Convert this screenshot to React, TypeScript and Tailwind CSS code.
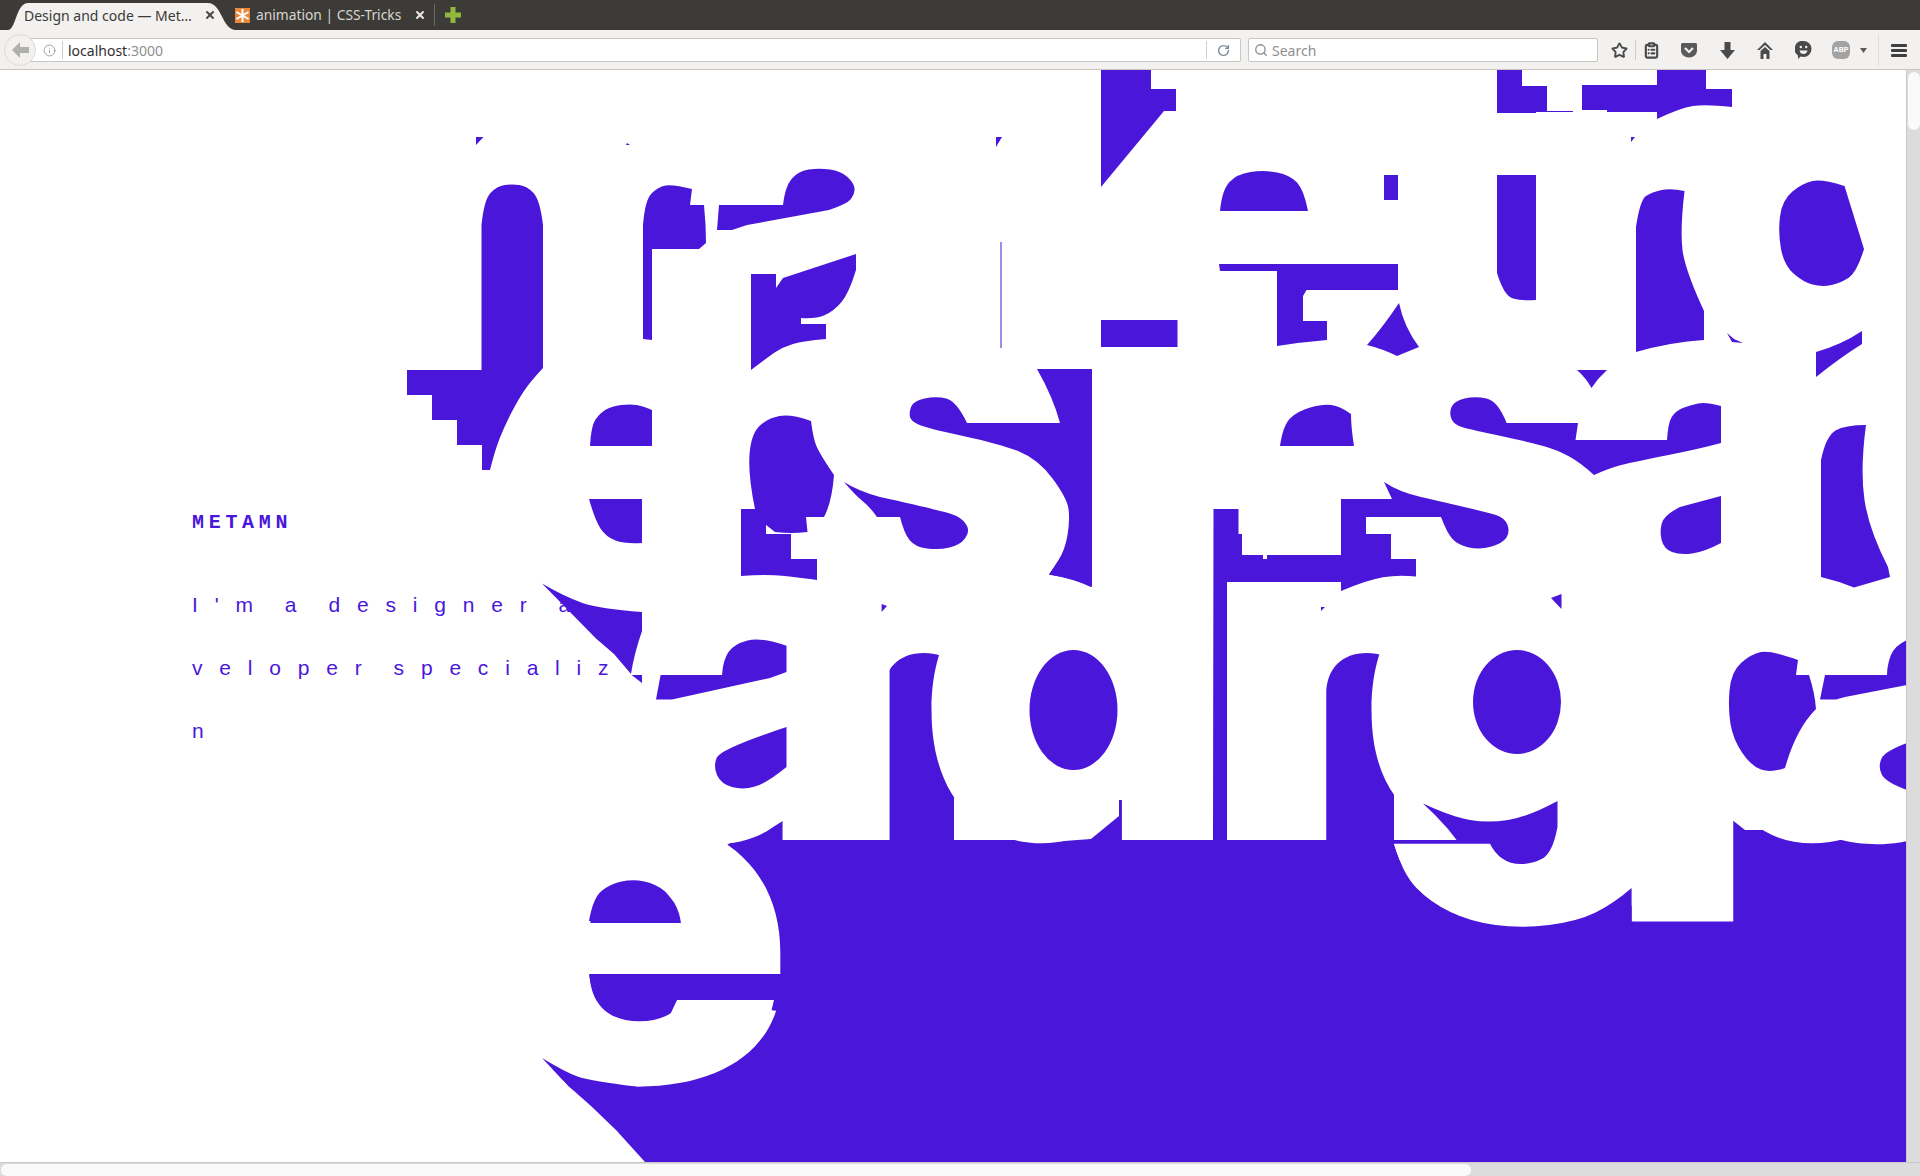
import type { ReactNode } from "react";
import { ClipboardList, Info, RotateCw, Search, Star, X } from "lucide-react";

const PURPLE = "#4a17da";
const SIZE = 475;
// page area starts under the browser chrome
const TOP = 70;

const ROW1 = 365;
const ROW2 = 602;
const ROW3 = 838;
const ROW4 = 1080;

const GLYPHS: { ch: string; x: number; base: number; sx?: number }[] = [
  { ch: "n", x: 357, base: ROW1 },
  { ch: "n", x: 519, base: ROW1 },
  { ch: "a", x: 678, base: ROW1 },
  { ch: "e", x: 1106, base: ROW1 },
  { ch: "u", x: 1372, base: ROW1 },
  { ch: "n", x: 1512, base: ROW1 },
  { ch: "o", x: 1661, base: ROW1 },
  { ch: "e", x: 476, base: ROW2 },
  { ch: "o", x: 631, base: ROW2 },
  { ch: "s", x: 782, base: ROW2 },
  { ch: "e", x: 1166, base: ROW2 },
  { ch: "s", x: 1322, base: ROW2 },
  { ch: "a", x: 1543, base: ROW2 },
  { ch: "n", x: 1697, base: ROW2 },
  { ch: "a", x: 609, base: ROW3 },
  { ch: "n", x: 757, base: ROW3 },
  { ch: "d", x: 916, base: ROW3 },
  { ch: "n", x: 1200, base: ROW3 },
  { ch: "g", x: 1356, base: ROW3 },
  { ch: "p", x: 1607, base: ROW3 },
  { ch: "a", x: 1773, base: ROW3 },
  { ch: "e", x: 470, base: ROW4, sx: 1.13 },
];

const G_CURVE = "1394,845 1403,874c 1430,902c 1470,921.5c 1521,928.5c 1577,921.5c 1613,904c 1631.6,888 1631.6,921.5 1731,921.5";

// long shadow sitting behind the big letters
const UNDER = [
  `645,1162 616,1130 591,1106 569,1086.6 542,1058 575,880 640,850 700,855 727,845 790,800 1394,800 ${G_CURVE} 1731,800 1907,800 1907,1162`,
  "880,640 962,640 962,810 880,810",
  "1320,640 1402,640 1402,810 1320,810",
];

// shadow fragments left between the letters, "c" marks a curved vertex
const OVER = [
  "476,137 483.5,137 476,145",
  "627,143 630,145 626,145",
  "996,137 1002,137 996,147",
  "1631,137 1635,137 1631,142",
  "1101,70 1151,70 1151,89 1176,89 1176,111 1164,111 1101,187",
  "1497,70 1522,70 1522,86 1547,86 1547,111 1573,111 1573,112 1536,112 1536,113 1497,113",
  "1582,85 1657,85 1657,70 1706,70 1706,89 1732,89 1732,107 1706,104c 1680,108c 1657,119 1657,112 1607,112 1607,110 1582,110",
  "481.5,370 481.5,225 484,200c 497,186c 512,184c 527,186c 540,200c 543,225 543,368 530,382c 518,400c 505,425c 495,450c 490,470 482,470 482,445 457,445 457,420 432,420 432,395 407,395 407,370",
  "643,339 643,225 645,200c 658,187c 673,184c 692,189 690,205 704,205 706,225c 706,243 699,249 652,249 652,340",
  "717,230 719,205 783,205 785,187c 798,171c 819,168c 841,171c 854,183c 855,194c 847,204c 829,210 747,225 732,230",
  "751,274 776,274 776,288 783,278 856,254 856,270 849,293c 834,311c 816,319c 801,318 801,324 826,324 826,339 803,341c 783,347c 768,357c 751,370",
  "1000.5,242 1001.5,242 1001.5,348 1000.5,348",
  "1101,320 1177.5,320 1177.5,347 1101,347",
  "1220,211 1222,190c 1237,174c 1264,170c 1290,175c 1304,190c 1308,211",
  "1219,264 1398,264 1398,290 1306.5,290 1303,296 1303,321 1327,321 1327,340 1303,342c 1277,346 1277,271 1220,271",
  "1384,175 1398,175 1398,200 1384,200",
  "1497,175 1536,175 1536,300 1522,301c 1504,296c 1497,273",
  "1636,352 1636,227 1640,200c 1652,192c 1671,188c 1684.5,191 1680,230c 1685,270c 1704,311 1704,340 1671,342c",
  "1778,233c 1782,200c 1803,183c 1822,179c 1844.5,186 1864,249 1857,272c 1841,283c 1822,287c 1803,282c 1784,265c",
  "1727,333 1734,339 1743,343 1732,342",
  "1816,352 1841,345c 1862,331 1862,344 1841,357c 1816,377",
  "1367,345 1383,327c 1399,303 1404,327c 1419,347 1397,356 1383,349c",
  "1577,370 1607,370 1598,378c 1591.5,388 1586,378c",
  "590,446 591,426c 600,413c 612,406c 630,404c 643,406c 652,410 652,446",
  "589,499 642,499 642,543 625,544c 606,537c 595,520c",
  "748,475c 751,434c 768,418c 791,414c 811,421 813,437c 819,453c 834,475 832,502c 824,517 806,517 807.5,532 791,534c 775,532 766,525 766,534 791,534 791,559 817,559 817,580 788,576c 761,574.5c 741,576 741,509 755,509",
  "909,413c 913,401c 936,396c 956.5,401c 967,423 1060,423 1053,397c 1037,369 1092,369 1092,587 1073.6,578.5c 1049,574.5 1052,570c 1065,550c 1070,520c 1067,498c 1038,459c 1000,444c 926,428c 911,421c",
  "844,482 858,491c 880,497 949,512c 964,520c 970,532c 960,545c 939,550c 915,547c 904,533c 900,517 877,517 870,507c 855,495c",
  "1280,446 1283,425c 1298,411c 1322.5,404c 1340,406c 1351,414 1351,427c 1354,446",
  "1449,413c 1454,401c 1475,396c 1498,401c 1506.6,423 1578,423 1575.5,440 1667,440 1668,423c 1675.5,411c 1690,405c 1706,402c 1721,406 1721,443 1699,449c 1633,462c 1609.5,468c 1594,475 1581,463c 1557.5,450c 1529,442c 1472.6,430c 1454,425c",
  "1213.5,509 1238.5,509 1238.5,534 1242,534 1242,555 1263,555 1263,559 1267,559 1267,555 1341,555 1341,499 1392,499 1384,482 1399,492c 1421,497 1487,512c 1505,518c 1510,532c 1503,543c 1480,550c 1458,545c 1447,533c 1441,517 1366,517 1366,534 1391,534 1391,559 1416,559 1416,576.5 1398.6,574.5c 1367,580c 1341,591 1341,582 1227,582 1227,840 1213,840",
  "1659.5,532c 1664,515c 1680,507 1721,496 1721,543 1704,552c 1680,555c 1664,549c",
  "1821,577 1821,460 1826,436c 1845,425c 1866,425 1860,470c 1869,530c 1888,567 1890,577 1854,587.5 1838,581c",
  "1049,574.5 1060,560 1091,560 1091,587 1073.6,578.5c",
  "542,583.6 565,597c 600,609c 642,612 642,631 634,654c 631,674 614,654 596,638.6 569,611",
  "631.6,675 642,675 642,683",
  "656,699.5 660.6,675 722,675 723,660c 734,644c 761,637c 786.5,645.7 786.5,672 770,678 672,699.5",
  "786.5,727 721,748.6c 713,766c 721,784c 743,790c 767,783c 786.5,767",
  "881.6,604 887,606 881.6,612",
  "1321,611 1325,607 1321,607",
  "1551,598 1561.5,594 1561.5,609",
  "1728,709c 1731,672c 1751,654c 1771,650c 1798,660 1796,675 1809,675 1815,693.6c 1816,709 1796,729c 1785,768 1771,773c 1751,766c 1733,739c",
  "1820,699.5 1825,675 1887,675 1887,666c 1894,646c 1907,640 1907,685 1845,697 1836,699.5",
  "1907,743 1885,751c 1878,766c 1885,782c 1907,790",
  "1423,803.6 1452,817c 1488,823c 1528,817c 1557.5,801 1557.5,827 1552.6,853c 1532.5,864c 1510,864c 1494.5,853c 1490,843.7 1394,843.7 1394,840 1456.6,840 1448,829 1435,815",
  `${G_CURVE} 1745,921.5 1745,950 1370,950 1370,845`,
  "589,974.5 594,1002c 614,1014c 640,1020c 665,1014c 677,1000 773.6,1000 778,974.5",
  "589,921 593,898c 610,884c 633,879c 656,884c 673,898c 678,921",
  "542,1058 565,1072c 590,1081c 636,1086.5 645,1095 600,1110 569,1086.6",
];

const WHITE_PATCHES = [
  "954,798 972,798 972,840 954,840",
  "1394,774 1412,774 1412,840 1394,840",
  "677,1000 774,1000 768,1025 690,1040 670,1015",
  "1731,795 1731,819 1745,830 1775,830 1760,795",
  "1119,790 1119,816 1091,839 1051,842 1051,800",
  "786,795 786,819 765,832 760,800",
  "555,590 600,590 600,608 565,597",
];

// polygon string to path: plain vertices stay corners, "c" vertices become curves
function toPath(shape: string) {
  const pts = shape.trim().split(/\s+/).map((t) => {
    const [x, y] = t.replace("c", "").split(",").map(Number);
    return { x, y, curved: t.endsWith("c") };
  });
  const n = pts.length;
  const first = pts[0];
  const last = pts[n - 1];
  const start = first.curved && last.curved ? { x: (first.x + last.x) / 2, y: (first.y + last.y) / 2 } : first.curved ? last : first;
  let d = `M${start.x} ${start.y}`;
  pts.forEach((p, i) => {
    const next = pts[(i + 1) % n];
    if (!p.curved) {
      d += `L${p.x} ${p.y}`;
    } else if (next.curved) {
      d += `Q${p.x} ${p.y} ${(p.x + next.x) / 2} ${(p.y + next.y) / 2}`;
    } else {
      d += `Q${p.x} ${p.y} ${next.x} ${next.y}`;
    }
  });
  return `${d}Z`;
}

function ArtShapes({ shapes, fill, children }: { shapes: string[]; fill: string; children?: ReactNode }) {
  return (
    <svg className="absolute left-0 top-0" width={1920} height={1106} viewBox={`0 ${TOP} 1920 1106`}>
      {shapes.map((shape, i) => (
        <path key={i} d={toPath(shape)} fill={fill} />
      ))}
      {children}
    </svg>
  );
}

function BigLetters() {
  return (
    <>
      {GLYPHS.map((g, i) => (
        <span
          key={i}
          className="absolute origin-top-left font-['Inter',sans-serif] font-black leading-none text-white"
          style={{ left: g.x, top: g.base - TOP - SIZE * 0.86, fontSize: SIZE, transform: `scaleX(${g.sx ?? 1.08})` }}
        >
          {g.ch}
        </span>
      ))}
    </>
  );
}

function TabBar() {
  return (
    <div className="relative flex h-[30px] items-center bg-[#3c3b37] pl-[24px] font-['Noto_Sans',sans-serif] text-[14px]">
      <svg className="absolute left-0 top-0" width="250" height="30" viewBox="0 0 250 30">
        <path d="M8 30 C16 30 16 3 28 3 L208 3 C222 3 222 30 236 30 Z" fill="#f2f1f0" />
      </svg>
      <span className="relative w-[172px] truncate text-[#3c3b37]">Design and code — Metamn</span>
      <X className="relative ml-[8px] h-3 w-3 text-[#4c4c4c]" strokeWidth={4} />
      <svg className="ml-[19px]" width="15" height="15" viewBox="0 0 15 15">
        <rect width="15" height="15" fill="#e8883a" />
        <path d="M7.5 1v13M1.5 4l12 7M13.5 4l-12 7" stroke="#fff" strokeWidth="2" />
      </svg>
      <span className="ml-[6px] w-[158px] text-[13.8px] text-[#d8d6d0]">animation | CSS-Tricks</span>
      <X className="h-3 w-3 text-[#e8e6e2]" strokeWidth={4} />
      <div className="ml-[8px] h-[22px] w-px bg-[#6a6964]" />
      <svg className="ml-[10px]" width="16" height="16" viewBox="0 0 16 16">
        <path d="M5.5 0h5v5.5H16v5h-5.5V16h-5v-5.5H0v-5h5.5z" fill="#8fb83c" />
      </svg>
    </div>
  );
}

function ToolbarIcons() {
  const ink = "#4a4a4a";
  const slot = "flex w-[38px] justify-center";
  return (
    <div className="flex items-center">
      <Star className="ml-[13px] h-[17px] w-[17px]" color={ink} strokeWidth={2.6} />
      <div className="ml-[7px] h-[20px] w-px bg-[#cfcbc6]" />
      <ClipboardList className="ml-[7px] h-[17px] w-[17px]" color={ink} strokeWidth={3} />
      <div className={`ml-[10px] ${slot}`}>
        <svg width="16" height="15" viewBox="0 0 16 15">
          <path d="M0 1.5C0 .6.6 0 1.5 0h13c.9 0 1.5.6 1.5 1.5v6c0 4-3.5 7-8 7s-8-3-8-7z" fill="#5a5a5a" />
          <path d="M4 5l4 4 4-4" fill="none" stroke="#f2f1f0" strokeWidth="2.2" />
        </svg>
      </div>
      <div className={slot}>
        <svg width="15" height="17" viewBox="0 0 15 17">
          <path d="M4.5 0h6v8H15l-7.5 9L0 8h4.5z" fill={ink} />
        </svg>
      </div>
      <div className={slot}>
        <svg width="16" height="17" viewBox="0 0 16 17">
          <path d="M8 0l8 8h-2.500L8 3 2.500 8H0zM8 5l4.500 4v8H9.500v-5h-3v5H3.500V9z" fill={ink} />
        </svg>
      </div>
      <div className={slot}>
        <svg width="17" height="18" viewBox="0 0 17 18">
          <path d="M8.500 0a8 8 0 0 1 0 16c-1 0-2 0-3-.4L3 18v-3.500A8 8 0 0 1 8.500 0z" fill={ink} />
          <circle cx="5.800" cy="6" r="1.200" fill="#f2f1f0" />
          <circle cx="11.200" cy="6" r="1.200" fill="#f2f1f0" />
          <path d="M4.500 9.500h8c-.5 2.500-2 3.500-4 3.500s-3.500-1-4-3.500z" fill="#f2f1f0" />
        </svg>
      </div>
      <div className={slot}>
        <div className="flex h-[18px] w-[18px] items-center justify-center rounded-[6px] bg-[#a3a3a3] font-['Liberation_Sans',sans-serif] text-[7px] font-bold text-white">ABP</div>
      </div>
      <svg width="7" height="5" viewBox="0 0 7 5">
        <path d="M0 0h7L3.500 5z" fill="#5a5a5a" />
      </svg>
      <div className="ml-[11px] h-[32px] w-px bg-[#e2dfdb]" />
      <div className="ml-[12px] flex w-[16px] flex-col gap-[2px]">
        <div className="h-[3px] rounded-[1px] bg-[#3f3f3f]" />
        <div className="h-[3px] rounded-[1px] bg-[#3f3f3f]" />
        <div className="h-[3px] rounded-[1px] bg-[#3f3f3f]" />
      </div>
    </div>
  );
}

function NavBar() {
  return (
    <div className="relative flex h-[40px] items-center border-b border-[#c9c5c0] bg-[#f2f1f0] pl-[25px] pt-[1px] font-['Noto_Sans',sans-serif] text-[14px]">
      <div className="flex h-[24px] w-[1216px] items-center rounded-[2px] border border-[#c9c5c0] bg-white">
        <Info className="ml-[17px] h-[13px] w-[13px] text-[#8c8c8c]" strokeWidth={1.5} />
        <div className="ml-[6px] h-[18px] w-px bg-[#cfcbc6]" />
        <span className="ml-[5px] text-[#2f2f2f]">localhost<span className="text-[#8f8f8f]">:3000</span></span>
        <div className="ml-auto h-[18px] w-px bg-[#d5d2cd]" />
        <RotateCw className="mx-[10px] h-[13px] w-[13px] text-[#7f8c96]" strokeWidth={2.6} />
      </div>
      <div className="absolute left-[4px] top-[4px] flex h-[32px] w-[32px] items-center justify-center rounded-full border border-[#dedbd7] bg-[#f2f1f0]">
        <svg width="17" height="16" viewBox="0 0 17 16">
          <path d="M8 0v5h9v6H8v5L0 8z" fill="#b0b0ae" />
        </svg>
      </div>
      <div className="ml-[7px] flex h-[24px] w-[350px] items-center rounded-[2px] border border-[#c9c5c0] bg-white">
        <Search className="ml-[5px] h-[14px] w-[14px] text-[#8a8a8a]" strokeWidth={2.2} />
        <span className="ml-[4px] text-[#8f8f8f]">Search</span>
      </div>
      <ToolbarIcons />
    </div>
  );
}

function Intro() {
  return (
    <div className="pl-[192px] pt-[443px] text-[#4a17da]">
      <div className="font-['Liberation_Mono',monospace] text-[20px] font-bold leading-[20px] tracking-[4.7px]">METAMN</div>
      <div className="mt-[40px] whitespace-pre font-['Liberation_Sans',sans-serif] text-[21px] leading-[63px] tracking-[16.8px] [word-spacing:-7.5px]">
        <div>I'm a designer a</div>
        <div>veloper specializ</div>
        <div>n</div>
      </div>
    </div>
  );
}

export default function App() {
  return (
    <div className="relative h-[1176px] w-[1920px] overflow-hidden bg-white">
      <TabBar />
      <NavBar />
      <main className="relative h-[1106px] overflow-hidden">
        <Intro />
        <ArtShapes shapes={UNDER} fill={PURPLE} />
        <BigLetters />
        <ArtShapes shapes={WHITE_PATCHES} fill="#ffffff" />
        <ArtShapes shapes={OVER} fill={PURPLE}>
          <ellipse cx="1073.5" cy="710" rx="44" ry="60" fill={PURPLE} />
          <ellipse cx="1517" cy="702" rx="44" ry="52" fill={PURPLE} />
        </ArtShapes>
      </main>
      {/* scrollbars */}
      <div className="absolute bottom-0 right-0 top-[70px] w-[14px] border-l border-[#c8c8c8] bg-[#dcdcdc]">
        <div className="ml-[1px] mt-[2px] h-[58px] w-[12px] rounded-full bg-[#fafafa]" />
      </div>
      <div className="absolute bottom-0 left-0 right-0 h-[14px] border-t border-[#c8c8c8] bg-[#dcdcdc]">
        <div className="ml-[1px] mt-[1px] h-[12px] w-[1470px] rounded-full bg-[#fafafa]" />
      </div>
    </div>
  );
}
